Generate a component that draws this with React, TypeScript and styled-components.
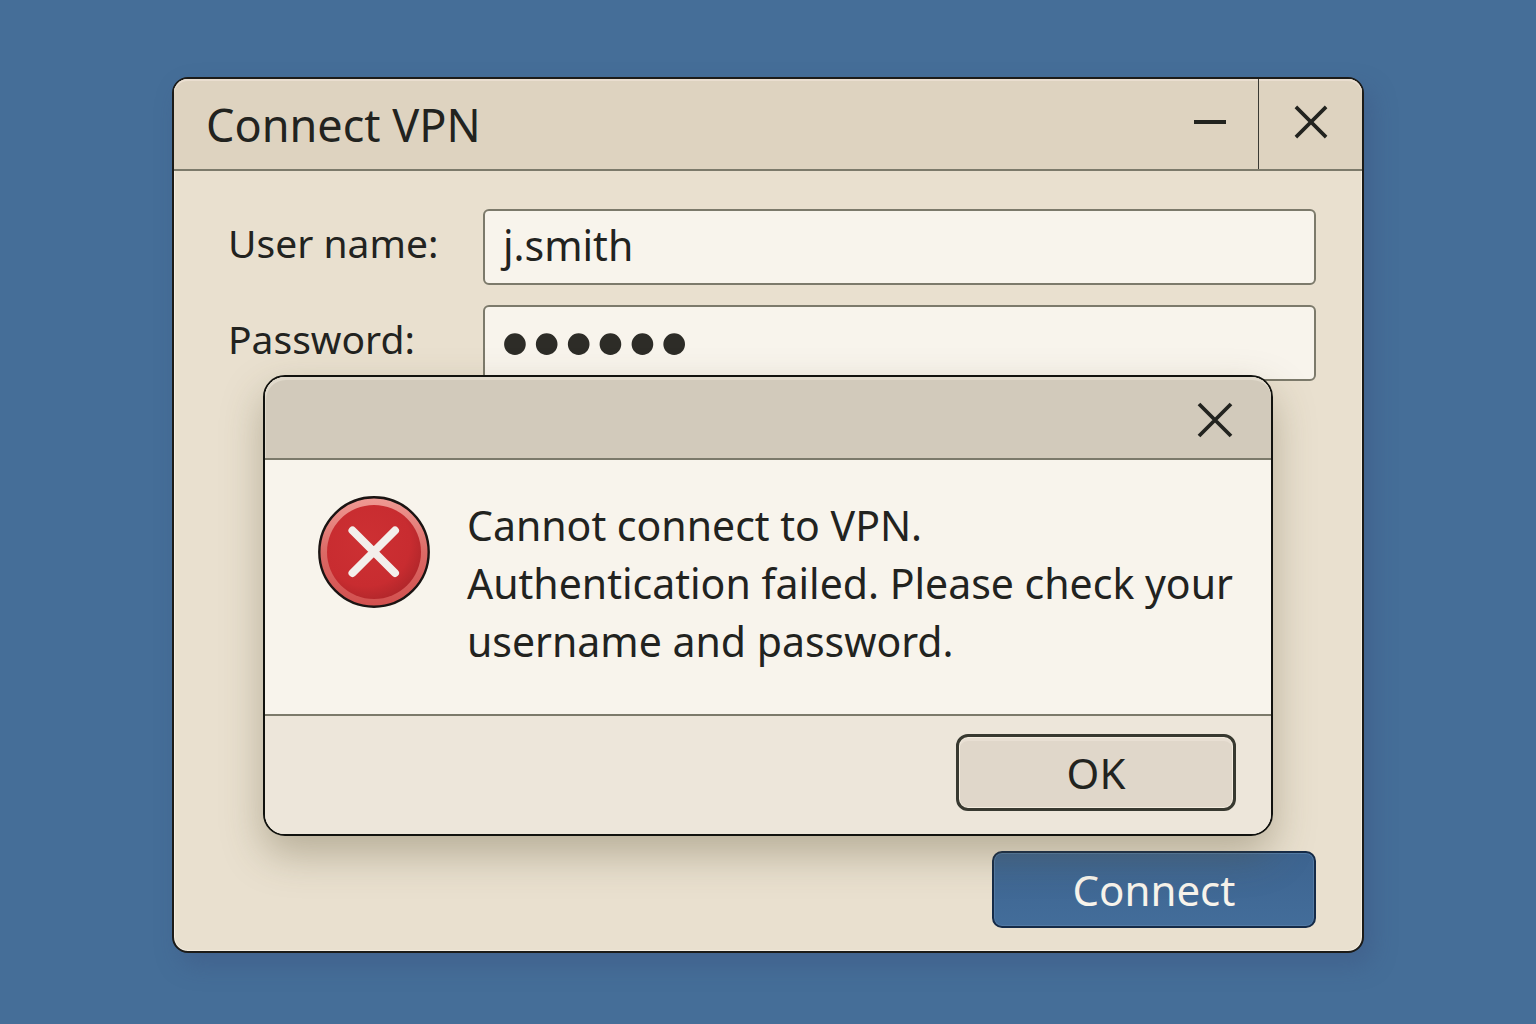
import React from "react";
import styled, { createGlobalStyle } from "styled-components";

const ink = "#22231f";
const line = "#7c7a6b";

const GlobalStyle = createGlobalStyle`
  *, *::before, *::after { box-sizing: border-box; }
  body {
    margin: 0;
    font-family: "Noto Sans", "Open Sans", sans-serif;
    color: ${ink};
    background: #456e98;
  }
  button, input { font-family: inherit; color: inherit; }
`;

const Desktop = styled.main`
  min-height: 100vh;
  display: flex;
  padding: 77px 172px 71px;
  background: #456e98;
`;

const Window = styled.section`
  position: relative;
  flex: 1;
  display: flex;
  flex-direction: column;
  border: 2px solid #1c1b18;
  border-radius: 16px;
  background: #e9e0cf;
  box-shadow: 8px 12px 24px rgba(60, 80, 125, 0.4), inset 0 0 0 1px #f6eee0;
`;

const TitleBar = styled.header`
  display: flex;
  align-items: stretch;
  height: 92px;
  padding-left: 32px;
  border-bottom: 2px solid ${line};
  border-radius: 14px 14px 0 0;
  background: #ded3c0;
  box-shadow: inset 0 2px 0 #eaded0;
`;

const Title = styled.h1`
  flex: 1;
  margin: 0;
  font-size: 45px;
  font-weight: 400;
  line-height: 92px;
`;

const CaptionButton = styled.button<{ $divided?: boolean }>`
  display: flex;
  align-items: center;
  justify-content: center;
  width: ${(p) => (p.$divided ? 104 : 96)}px;
  padding: 0 0 4px;
  border: 0;
  border-left: ${(p) => (p.$divided ? `1px solid #3a3933` : "0")};
  background: transparent;
`;

const Form = styled.form`
  flex: 1;
  display: flex;
  flex-direction: column;
  justify-content: space-between;
  padding: 38px 46px 23px 54px;
`;

const Fields = styled.div`
  display: grid;
  grid-template-columns: 255px 1fr;
  row-gap: 20px;
`;

const Label = styled.label`
  font-size: 39px;
  line-height: 68px;
`;

const Field = styled.input`
  width: 100%;
  height: 76px;
  padding: 0 14px 4px;
  text-indent: 4px;
  border: 2px solid ${line};
  border-radius: 6px;
  background: #f8f4ec;
  font-size: 41px;
  outline: 0;

  &[type="password"] {
    padding: 0 14px;
    text-indent: 0;
    font-family: "Liberation Serif", serif;
    font-size: 91px;
    color: #2d2c27;
  }
`;

const ConnectButton = styled.button`
  align-self: flex-end;
  width: 324px;
  height: 77px;
  padding: 0;
  border: 2px solid #152b48;
  border-radius: 10px;
  background: linear-gradient(#3d6490, #436d9a);
  box-shadow: inset 0 0 0 1px #527aa5;
  color: #f8f4ec;
  font-size: 42px;
  line-height: 70px;
`;

const Dialog = styled.section`
  position: absolute;
  top: 296px;
  left: 89px;
  right: 89px;
  border: 2px solid #11120e;
  border-radius: 22px;
  background: #f8f4ec;
  box-shadow: 0 18px 40px rgba(90, 80, 50, 0.35);
`;

const DialogBar = styled.header`
  display: flex;
  justify-content: flex-end;
  height: 83px;
  border-bottom: 2px solid ${line};
  border-radius: 20px 20px 0 0;
  background: #d2cabb;
  box-shadow: inset 1px 3px 0 #e0d9cb;
`;

const DialogClose = styled.button`
  display: flex;
  align-items: center;
  justify-content: center;
  width: 112px;
  padding: 4px 0 0;
  border: 0;
  background: transparent;
`;

const Message = styled.div`
  display: flex;
  align-items: flex-start;
  gap: 37px;
  min-height: 254px;
  padding: 36px 24px 0 53px;

  svg { flex-shrink: 0; }
`;

const MessageText = styled.p`
  margin: 0;
  font-size: 41px;
  line-height: 58px;
`;

const DialogFooter = styled.footer`
  display: flex;
  justify-content: flex-end;
  padding: 18px 35px 23px;
  border-top: 2px solid ${line};
  border-radius: 0 0 20px 20px;
  background: #ede6da;
`;

const OkButton = styled.button`
  width: 280px;
  height: 77px;
  padding: 0;
  border: 3px solid #383930;
  border-radius: 12px;
  background: #e0d7ca;
  box-shadow: inset 0 0 0 1px #f4ecdf, inset 0 4px 0 #e8dfd3;
  font-size: 42px;
  line-height: 70px;
`;

const CrossIcon = ({ size }: { size: number }) => (
  <svg width={size} height={size} viewBox="0 0 36 36" aria-hidden="true">
    <path d="M2 2L34 34M34 2L2 34" stroke={ink} strokeWidth="3.8" fill="none" />
  </svg>
);

const MinimizeIcon = () => (
  <svg width="32" height="36" viewBox="0 0 32 36" aria-hidden="true">
    <path d="M0 18H32" stroke={ink} strokeWidth="4" />
  </svg>
);

const ErrorIcon = () => (
  <svg width="112" height="112" viewBox="0 0 112 112" role="img" aria-label="Error">
    <defs>
      <linearGradient id="rim" x1="0" y1="0" x2="0" y2="1">
        <stop offset="0" stopColor="#f09a94" />
        <stop offset="0.5" stopColor="#dc6a66" />
        <stop offset="1" stopColor="#d24f4e" />
      </linearGradient>
      <radialGradient id="face" cx="0.42" cy="0.4" r="0.62">
        <stop offset="0" stopColor="#cd3033" />
        <stop offset="0.75" stopColor="#c82c30" />
        <stop offset="1" stopColor="#b3272b" />
      </radialGradient>
    </defs>
    <circle cx="56" cy="56" r="54.7" fill="url(#rim)" stroke="#1b1413" strokeWidth="2.4" />
    <circle cx="56" cy="56" r="47" fill="url(#face)" />
    <path d="M34.5 34.5L77 77M77 34.5L34.5 77" stroke="#f3efeb" strokeWidth="8" strokeLinecap="round" />
  </svg>
);

export default function App() {
  return (
    <>
      <GlobalStyle />
      <Desktop>
        <Window aria-labelledby="window-title">
          <TitleBar>
            <Title id="window-title">Connect VPN</Title>
            <CaptionButton type="button" aria-label="Minimize">
              <MinimizeIcon />
            </CaptionButton>
            <CaptionButton type="button" aria-label="Close" $divided>
              <CrossIcon size={34} />
            </CaptionButton>
          </TitleBar>
          <Form onSubmit={(e) => e.preventDefault()}>
            <Fields>
              <Label htmlFor="username">User name:</Label>
              <Field id="username" type="text" defaultValue="j.smith" spellCheck={false} />
              <Label htmlFor="password">Password:</Label>
              <Field id="password" type="password" defaultValue="secret" />
            </Fields>
            <ConnectButton type="submit">Connect</ConnectButton>
          </Form>
          <Dialog role="alertdialog" aria-describedby="dialog-message">
            <DialogBar>
              <DialogClose type="button" aria-label="Close message">
                <CrossIcon size={36} />
              </DialogClose>
            </DialogBar>
            <Message>
              <ErrorIcon />
              <MessageText id="dialog-message">
                Cannot connect to VPN.
                <br />
                Authentication failed. Please check your username and password.
              </MessageText>
            </Message>
            <DialogFooter>
              <OkButton type="button">OK</OkButton>
            </DialogFooter>
          </Dialog>
        </Window>
      </Desktop>
    </>
  );
}
